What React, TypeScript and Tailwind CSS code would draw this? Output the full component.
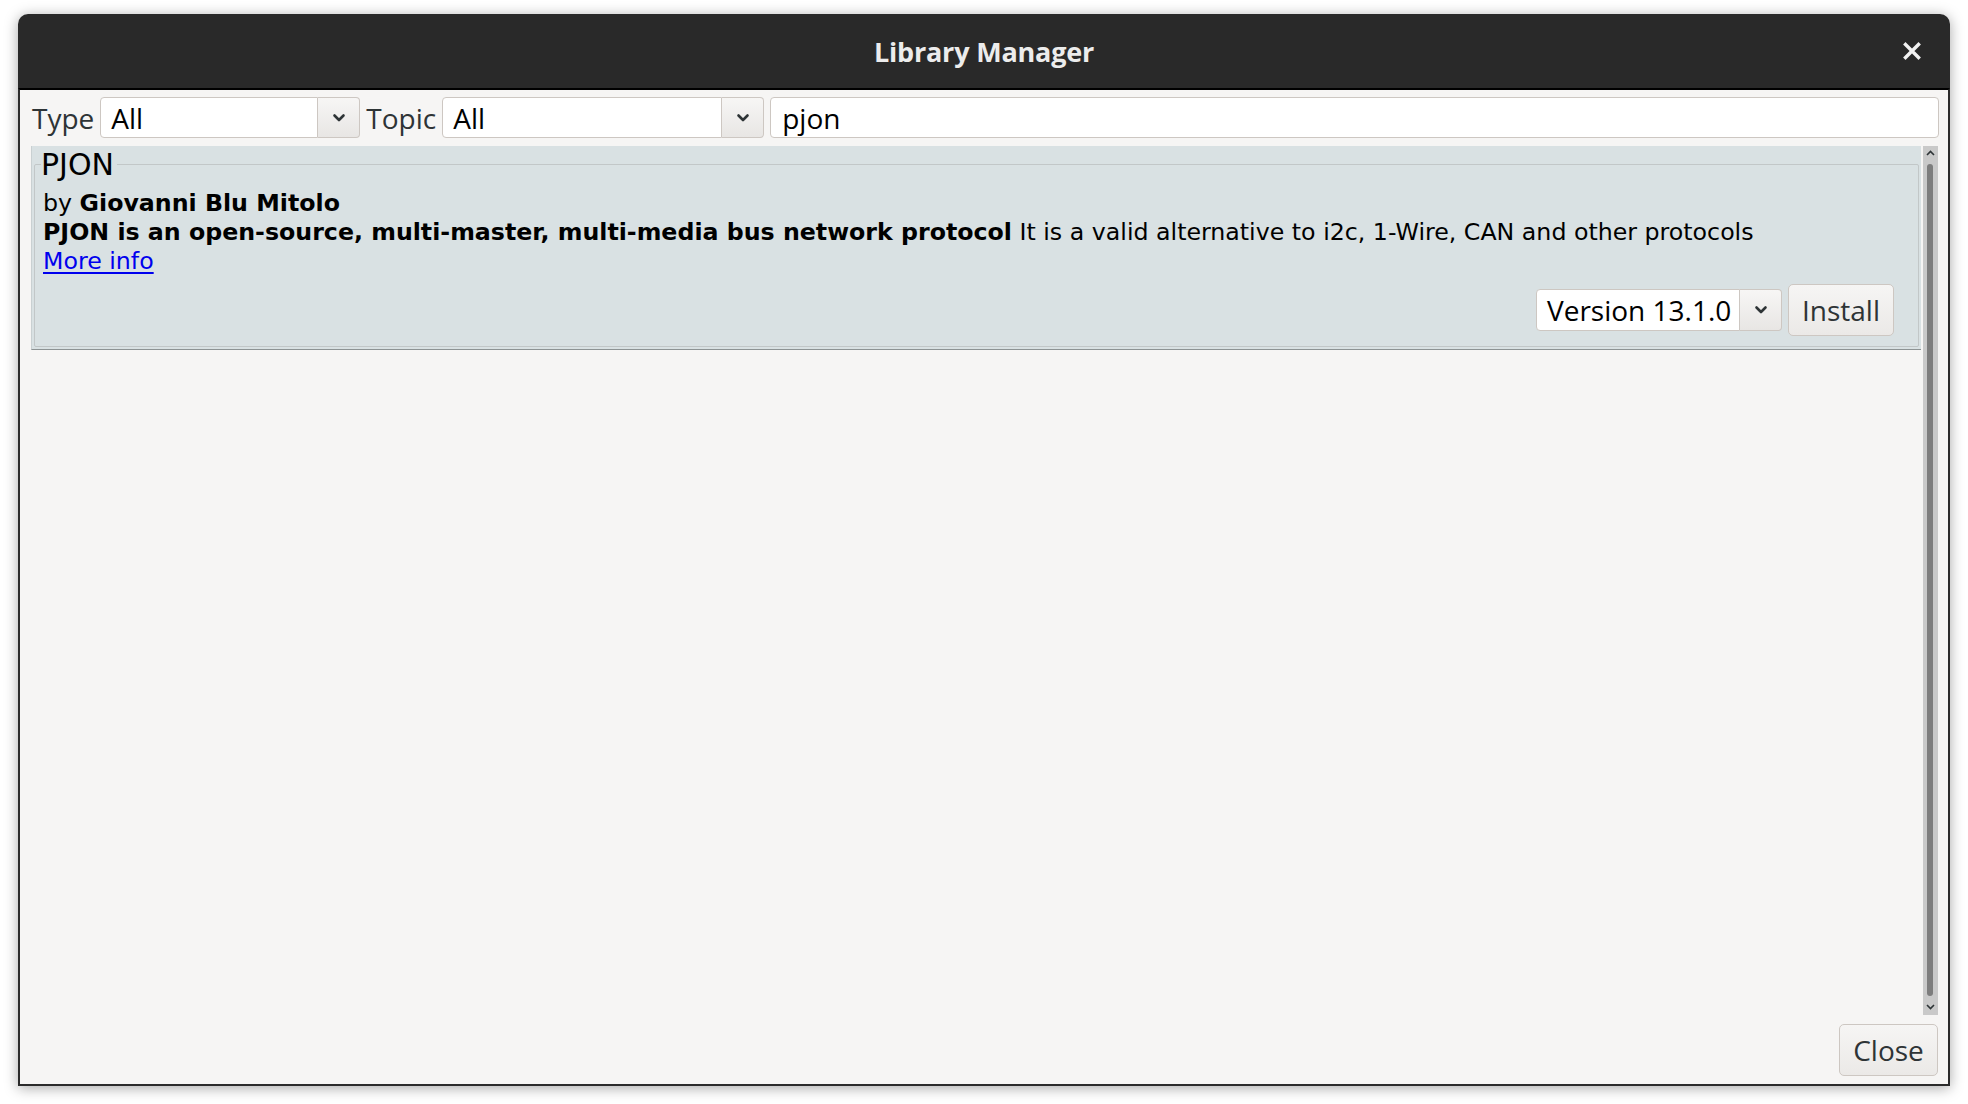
import React from 'react';

const ui = { fontFamily: '"Open Sans", "Noto Sans", sans-serif' };
const body = { fontFamily: '"DejaVu Sans", "Liberation Sans", sans-serif' };

const Chevron = () => (
    <svg width="16" height="12" viewBox="0 0 16 12" fill="none">
        <path d="M3.5 3.5 L8 8 L12.5 3.5" stroke="#2e3436" strokeWidth="2.6" strokeLinecap="round" strokeLinejoin="round" />
    </svg>
);

const Combo = ({ value, width }: { value: string; width: string }) => (
    <div className="flex h-[41px]">
        <div className={`${width} h-full bg-white border border-[#cdc7c2] rounded-l-[4px] flex items-center pl-[10px] text-[28px] text-black`}>
            {value}
        </div>
        <button className="w-[42px] h-full border border-l-0 border-[#cdc7c2] rounded-r-[4px] bg-gradient-to-b from-[#f7f6f5] to-[#e8e6e4] flex items-center justify-center">
            <Chevron />
        </button>
    </div>
);

export default function App() {
    return (
        <div className="w-[1968px] h-[1104px] bg-white pt-[14px] pl-[18px]" style={ui}>
            <div className="w-[1932px] h-[1072px] flex flex-col rounded-t-[10px] shadow-[0_2px_14px_rgba(0,0,0,0.35)]">
                {/* Title bar */}
                <header className="h-[74px] bg-[#292929] rounded-t-[10px] grid grid-cols-[1fr_auto_1fr] items-center">
                    <div />
                    <h1 className="text-[27px] font-bold text-[#ececec] tracking-[-0.2px] mt-[3px]">Library Manager</h1>
                    <div className="flex justify-end pr-[29px]">
                        <svg width="18" height="18" viewBox="0 0 18 18">
                            <path d="M2.5 2.5 L15.5 15.5 M15.5 2.5 L2.5 15.5" stroke="#f2f2f2" strokeWidth="3.4" strokeLinecap="square" />
                        </svg>
                    </div>
                </header>

                <div className="flex-1 min-h-0 flex flex-col bg-[#f6f5f4] border-2 border-[#2b2b2b] border-t-black">
                    {/* Filter toolbar */}
                    <div className="mt-[7px] h-[41px] flex items-center gap-[6px] pl-[12px] pr-[9px]">
                        <span className="text-[28px] text-[#2e3436]">Type</span>
                        <Combo value="All" width="w-[218px]" />
                        <span className="text-[28px] text-[#2e3436]">Topic</span>
                        <Combo value="All" width="w-[280px]" />
                        <div className="flex-1 h-full bg-white border border-[#cdc7c2] rounded-[4px] flex items-center pl-[11px] text-[28px] text-black">
                            pjon
                        </div>
                    </div>

                    {/* Library list */}
                    <div className="flex-1 min-h-0 mt-[8px] ml-[11px] mr-[10px] flex gap-[2px]">
                        <div className="flex-1 min-w-0 flex flex-col">
                            <div className="bg-[#d9e1e3] border-b border-[#8d9394] border-l border-l-[#c9d0d2] pt-[1px] px-[2px] pb-[2px]" style={body}>
                                <fieldset className="border border-[#c2c7c8] rounded-[2px]">
                                    <legend className="ml-[6px] pr-[3px] text-[30px] text-black leading-[35px]">PJON</legend>
                                    <div className="mt-[7px] pl-[8px] text-[23.7px] leading-[29px] text-black">
                                        <p>by <b>Giovanni Blu Mitolo</b></p>
                                        <p>
                                            <b>PJON is an open-source, multi-master, multi-media bus network protocol</b> It is a valid alternative to i2c, 1-Wire, CAN and other protocols
                                        </p>
                                        <p><a className="text-[#0000ee] underline underline-offset-[3px]">More info</a></p>
                                    </div>
                                    <div className="mt-[8px] h-[52px] flex items-center justify-end gap-[6px] pr-[24px] mb-[10px]" style={ui}>
                                        <div className="flex h-[42px]">
                                            <div className="w-[204px] h-full bg-white border border-[#cdc7c2] rounded-l-[4px] flex items-center pl-[10px] text-[28px] text-black">
                                                Version 13.1.0
                                            </div>
                                            <button className="w-[42px] h-full border border-l-0 border-[#cdc7c2] rounded-r-[4px] bg-gradient-to-b from-[#f7f6f5] to-[#e8e6e4] flex items-center justify-center">
                                                <Chevron />
                                            </button>
                                        </div>
                                        <button className="w-[106px] h-[52px] border border-[#cdc7c2] rounded-[5px] bg-gradient-to-b from-[#f6f5f4] to-[#ebe9e7] text-[28px] text-[#2e3436]">
                                            Install
                                        </button>
                                    </div>
                                </fieldset>
                            </div>
                        </div>

                        {/* Scrollbar */}
                        <div className="w-[15px] bg-[#c9c9c9] flex flex-col items-center">
                            <svg className="mt-[4px]" width="9" height="6" viewBox="0 0 9 6">
                                <path d="M1 5 L4.5 1.5 L8 5" stroke="#2e3436" strokeWidth="1.6" fill="none" />
                            </svg>
                            <div className="flex-1 w-full flex pl-[4px] py-[8px]">
                                <div className="w-[6px] h-full rounded-[3px] bg-[#7d7d7d]" />
                            </div>
                            <svg className="mb-[5px]" width="9" height="6" viewBox="0 0 9 6">
                                <path d="M1 1 L4.5 4.5 L8 1" stroke="#2e3436" strokeWidth="1.6" fill="none" />
                            </svg>
                        </div>
                    </div>

                    {/* Footer */}
                    <div className="flex justify-end pt-[9px] pb-[8px] pr-[10px]">
                        <button className="w-[99px] h-[52px] border border-[#cdc7c2] rounded-[5px] bg-gradient-to-b from-[#f6f5f4] to-[#ebe9e7] text-[28px] text-[#2e3436]">
                            Close
                        </button>
                    </div>
                </div>
            </div>
        </div>
    );
}
